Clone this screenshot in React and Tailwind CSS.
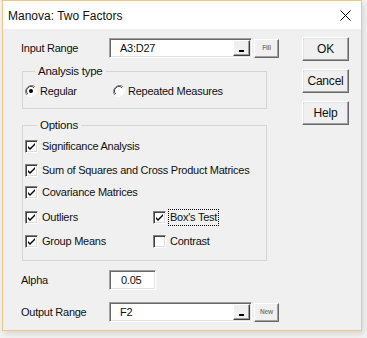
import React from "react";

const font = { fontFamily: '"Liberation Sans", Arial, sans-serif' };

function Check({ checked }) {
  return (
    <span className="w-[13px] h-[13px] shrink-0 bg-white border-t border-l border-t-[#808080] border-l-[#808080] border-b border-r border-b-white border-r-white shadow-[inset_1px_1px_0_#404040,inset_-1px_-1px_0_#dcdcdc] flex items-center justify-center">
      {checked && (
        <svg width="9" height="9" viewBox="0 0 9 9">
          <path d="M1 4 L3 6 L8 1 L8 3 L3 8 L1 6 Z" fill="#000" />
        </svg>
      )}
    </span>
  );
}

function Radio({ checked }) {
  return (
    <svg width="12" height="12" viewBox="0 0 12 12" className="shrink-0">
      <path d="M10.2 1.8 A6 6 0 0 0 1.8 10.2" stroke="#808080" strokeWidth="1" fill="none" />
      <path d="M1.8 10.2 A6 6 0 0 0 10.2 1.8" stroke="#ffffff" strokeWidth="1" fill="none" />
      <circle cx="6" cy="6" r="4.5" fill="#fff" />
      <path d="M9.2 2.8 A4.5 4.5 0 0 0 2.8 9.2" stroke="#404040" strokeWidth="1" fill="none" />
      {checked && <circle cx="6" cy="6" r="2" fill="#000" />}
    </svg>
  );
}

function CheckRow({ label, checked, focus, className = "" }) {
  return (
    <div className={"flex items-center h-[16px] whitespace-nowrap " + className}>
      <Check checked={checked} />
      <span
        className={
          "ml-[3px] px-[1px] leading-[15px] " +
          (focus ? "outline outline-1 outline-dotted outline-[#000]" : "")
        }
      >
        {label}
      </span>
    </div>
  );
}

function RefInput({ value, width, btn }) {
  return (
    <div className="flex items-center">
      <div
        className={
          "h-[20px] bg-white border-t border-l border-t-[#a0a0a0] border-l-[#a0a0a0] border-b border-r border-b-white border-r-white shadow-[inset_1px_1px_0_#696969,inset_-1px_-1px_0_#e3e3e3] flex items-center " +
          width
        }
      >
        <span className="ml-[10px] flex-1 leading-[14px]">{value}</span>
        <div className="w-[17px] h-[16px] mr-[1px] bg-[#f0f0f0] border-t border-l border-t-white border-l-white border-b border-r border-b-[#404040] border-r-[#404040] shadow-[inset_-1px_-1px_0_#a0a0a0] flex items-end justify-center pb-[3px]">
          <span className="block w-[5px] h-[2px] bg-black" />
        </div>
      </div>
      <div className="ml-[2px] w-[25px] h-[19px] bg-[#f0f0f0] border-t border-l border-t-white border-l-white border-b border-r border-b-[#696969] border-r-[#696969] shadow-[inset_-1px_-1px_0_#a0a0a0] flex items-center justify-center">
        <span className="text-[6.5px] leading-[8px] text-[#808080] font-bold tracking-[-0.2px]">{btn}</span>
      </div>
    </div>
  );
}

function Btn({ children, className = "" }) {
  return (
    <div
      className={
        "w-[47px] h-[24px] bg-[#f0f0f0] border-t border-l border-t-white border-l-white border-b border-r border-b-[#696969] border-r-[#696969] shadow-[inset_-1px_-1px_0_#a0a0a0,inset_1px_1px_0_#e3e3e3] flex items-center justify-center text-[12px] tracking-[-0.2px] " +
        className
      }
    >
      {children}
    </div>
  );
}

export default function App() {
  return (
    <div className="w-[367px] h-[338px] bg-[#f3f3f3] pl-[2px] pt-[0px]" style={font}>
      <div className="w-[360px] h-[331px] border border-[#f1c487] bg-[#f0f0f0] flex flex-col shadow-[2px_3px_6px_rgba(0,0,0,0.12)] text-[11px] tracking-[-0.25px] text-[#111] whitespace-nowrap">
        <div className="h-[28px] bg-white flex items-center pl-[5px] pr-[10px]">
          <span className="text-[12px] leading-[16px] mt-[1px] tracking-[0px]">Manova: Two Factors</span>
          <svg width="11" height="11" viewBox="0 0 11 11" className="ml-auto mr-[0px] mt-[1px]">
            <path d="M0.5 0.5 L10.5 10.5 M10.5 0.5 L0.5 10.5" stroke="#000" strokeWidth="1" />
          </svg>
        </div>
        <div className="flex pl-[18px] pr-[12px]">
          <div className="flex flex-col w-[258px] shrink-0">
            <div className="flex items-center mt-[9px]">
              <span className="w-[88px]">Input Range</span>
              <RefInput value="A3:D27" width="w-[143px]" btn="Fill" />
            </div>

            <fieldset className="ml-[1px] mt-[6px] w-[245px] min-w-0 border border-[#d5d5d5] pl-[2px] pb-[9px]">
              <legend className="ml-[10px] px-[3px] leading-[15px] text-[11.5px]">Analysis type</legend>
              <div className="flex items-center h-[16px] mt-[4px]">
                <Radio checked />
                <span className="ml-[3px] w-[73px]">Regular</span>
                <Radio />
                <span className="ml-[3px]">Repeated Measures</span>
              </div>
            </fieldset>

            <fieldset className="ml-[1px] mt-[9px] w-[245px] min-w-0 border border-[#d5d5d5] pl-[2px] pb-[11px]">
              <legend className="ml-[12px] px-[3px] leading-[15px] text-[11.5px]">Options</legend>
              <CheckRow className="mt-[5px]" label="Significance Analysis" checked />
              <CheckRow className="mt-[8px]" label="Sum of Squares and Cross Product Matrices" checked />
              <CheckRow className="mt-[6px]" label="Covariance Matrices" checked />
              <div className="flex mt-[9px]">
                <CheckRow className="w-[128px]" label="Outliers" checked />
                <CheckRow label="Box's Test" checked focus />
              </div>
              <div className="flex mt-[8px]">
                <CheckRow className="w-[128px]" label="Group Means" checked />
                <CheckRow label="Contrast" />
              </div>
            </fieldset>

            <div className="flex items-center mt-[9px]">
              <span className="w-[88px]">Alpha</span>
              <div className="w-[47px] h-[20px] bg-white border-t border-l border-t-[#a0a0a0] border-l-[#a0a0a0] border-b border-r border-b-white border-r-white shadow-[inset_1px_1px_0_#696969,inset_-1px_-1px_0_#e3e3e3] flex items-center">
                <span className="ml-[11px]">0.05</span>
              </div>
            </div>

            <div className="flex items-center mt-[12px]">
              <span className="w-[88px]">Output Range</span>
              <RefInput value="F2" width="w-[143px]" btn="New" />
            </div>
          </div>

          <div className="ml-auto flex flex-col gap-[8px] mt-[8px]">
            <Btn>OK</Btn>
            <Btn>Cancel</Btn>
            <Btn>Help</Btn>
          </div>
        </div>
      </div>
    </div>
  );
}
